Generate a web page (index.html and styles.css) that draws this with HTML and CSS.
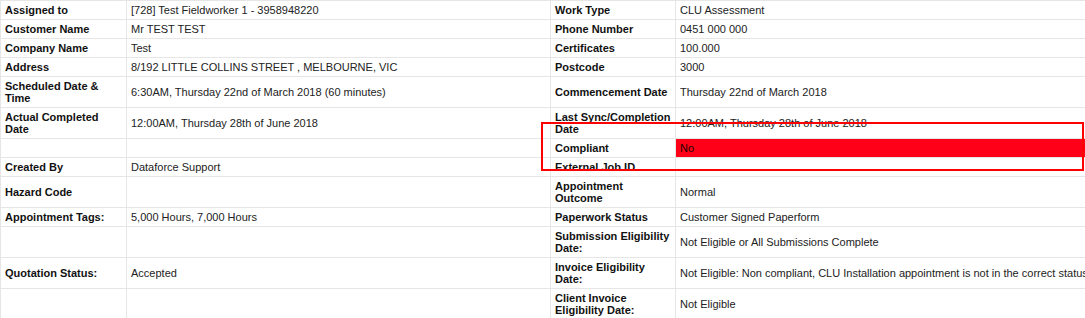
FILE: index.html
```html
<!DOCTYPE html>
<html lang="en">
<head>
<meta charset="utf-8">
<title>Appointment details</title>
<link rel="stylesheet" href="styles.css">
</head>
<body>
<div class="sheet">
  <table class="details">
    <colgroup>
      <col class="c-label">
      <col class="c-value">
      <col class="c-label2">
      <col class="c-value2">
    </colgroup>
    <tbody>
      <tr>
        <td class="lbl">Assigned to</td><td class="val">[728] Test Fieldworker 1 - 3958948220</td>
        <td class="lbl">Work Type</td><td class="val">CLU Assessment</td>
      </tr>
      <tr>
        <td class="lbl">Customer Name</td><td class="val">Mr TEST TEST</td>
        <td class="lbl">Phone Number</td><td class="val">0451 000 000</td>
      </tr>
      <tr>
        <td class="lbl">Company Name</td><td class="val">Test</td>
        <td class="lbl">Certificates</td><td class="val">100.000</td>
      </tr>
      <tr>
        <td class="lbl">Address</td><td class="val">8/192 LITTLE COLLINS STREET , MELBOURNE, VIC</td>
        <td class="lbl">Postcode</td><td class="val">3000</td>
      </tr>
      <tr>
        <td class="lbl">Scheduled Date &amp; Time</td><td class="val">6:30AM, Thursday 22nd of March 2018 (60 minutes)</td>
        <td class="lbl">Commencement Date</td><td class="val">Thursday 22nd of March 2018</td>
      </tr>
      <tr>
        <td class="lbl">Actual Completed Date</td><td class="val">12:00AM, Thursday 28th of June 2018</td>
        <td class="lbl">Last Sync/Completion Date</td><td class="val">12:00AM, Thursday 28th of June 2018</td>
      </tr>
      <tr>
        <td class="lbl"></td><td class="val"></td>
        <td class="lbl">Compliant</td><td class="val flag">No</td>
      </tr>
      <tr>
        <td class="lbl">Created By</td><td class="val">Dataforce Support</td>
        <td class="lbl">External Job ID</td><td class="val"></td>
      </tr>
      <tr>
        <td class="lbl">Hazard Code</td><td class="val"></td>
        <td class="lbl">Appointment Outcome</td><td class="val">Normal</td>
      </tr>
      <tr>
        <td class="lbl">Appointment Tags:</td><td class="val">5,000 Hours, 7,000 Hours</td>
        <td class="lbl">Paperwork Status</td><td class="val">Customer Signed Paperform</td>
      </tr>
      <tr>
        <td class="lbl"></td><td class="val"></td>
        <td class="lbl">Submission Eligibility Date:</td><td class="val">Not Eligible or All Submissions Complete</td>
      </tr>
      <tr>
        <td class="lbl">Quotation Status:</td><td class="val">Accepted</td>
        <td class="lbl">Invoice Eligibility Date:</td><td class="val">Not Eligible: Non compliant, CLU Installation appointment is not in the correct status</td>
      </tr>
      <tr>
        <td class="lbl"></td><td class="val"></td>
        <td class="lbl">Client Invoice Eligibility Date:</td><td class="val">Not Eligible</td>
      </tr>
    </tbody>
  </table>
  <div class="highlight-box"></div>
</div>
</body>
</html>
```

FILE: styles.css
```css
html, body {
  margin: 0;
  padding: 0;
  background: #ffffff;
}

body {
  font-family: "Liberation Sans", Arial, sans-serif;
  font-size: 11px;
  color: #222222;
}

.sheet {
  position: relative;
  width: 100%;
  overflow: hidden;
}

.details {
  width: 1200px;
  table-layout: fixed;
  border-collapse: collapse;
}

.c-label { width: 126px; }
.c-value { width: 424px; }
.c-label2 { width: 125px; }
.c-value2 { width: 525px; }

.details td {
  border: 1px solid #e6e6e6;
  padding: 3px 4px;
  line-height: 12px;
  vertical-align: middle;
}

.details td.lbl {
  font-weight: bold;
  color: #111111;
}

.details td.val {
  white-space: nowrap;
  overflow: hidden;
  color: #222222;
}

.details td.flag {
  background: #ff0019;
  color: #1a0000;
}

.highlight-box {
  position: absolute;
  left: 541px;
  top: 122px;
  width: 543px;
  height: 49px;
  box-sizing: border-box;
  border: 2px solid #ff0000;
  pointer-events: none;
}
```
